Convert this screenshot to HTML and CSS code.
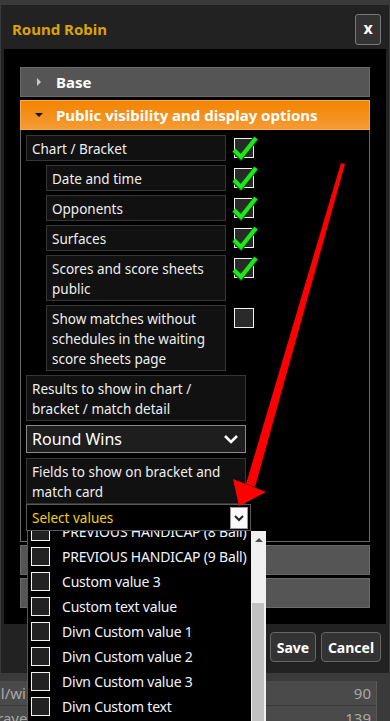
FILE: index.html
```html
<!DOCTYPE html>
<html lang="en">
<head>
    <meta charset="UTF-8">
    <meta name="viewport" content="width=device-width, initial-scale=1.0">
    <title>Round Robin</title>
    <link rel="stylesheet" href="styles.css">
</head>
<body>
    <div class="dialog">
        <div class="dlg-head">
            <h1 class="dlg-title">Round Robin</h1>
            <button type="button" class="close-btn">x</button>
        </div>
        <div class="dlg-body">
            <div class="accordion">
                <div class="acc-head"><span class="tri-right"></span>Base</div>
                <div class="acc-head active"><span class="tri-down"></span>Public visibility and display options</div>
                <div class="acc-panel">
                    <div class="opt-row">
                        <div class="opt-label">Chart / Bracket</div>
                        <span class="cb checked"><svg viewBox="0 0 26 26"><polyline points="2,15 9,22 24,3" class="tick-edge"/><polyline points="2,15 9,22 24,3" class="tick"/></svg></span>
                    </div>
                    <div class="opt-row sub">
                        <div class="opt-label">Date and time</div>
                        <span class="cb checked"><svg viewBox="0 0 26 26"><polyline points="2,15 9,22 24,3" class="tick-edge"/><polyline points="2,15 9,22 24,3" class="tick"/></svg></span>
                    </div>
                    <div class="opt-row sub">
                        <div class="opt-label">Opponents</div>
                        <span class="cb checked"><svg viewBox="0 0 26 26"><polyline points="2,15 9,22 24,3" class="tick-edge"/><polyline points="2,15 9,22 24,3" class="tick"/></svg></span>
                    </div>
                    <div class="opt-row sub">
                        <div class="opt-label">Surfaces</div>
                        <span class="cb checked"><svg viewBox="0 0 26 26"><polyline points="2,15 9,22 24,3" class="tick-edge"/><polyline points="2,15 9,22 24,3" class="tick"/></svg></span>
                    </div>
                    <div class="opt-row sub">
                        <div class="opt-label">Scores and score sheets public</div>
                        <span class="cb checked"><svg viewBox="0 0 26 26"><polyline points="2,15 9,22 24,3" class="tick-edge"/><polyline points="2,15 9,22 24,3" class="tick"/></svg></span>
                    </div>
                    <div class="opt-row sub">
                        <div class="opt-label">Show matches without schedules in the waiting score sheets page</div>
                        <span class="cb"></span>
                    </div>

                    <div class="field-label">Results to show in chart / bracket / match detail</div>
                    <div class="select">
                        <span>Round Wins</span>
                        <svg class="chev" viewBox="0 0 16 10"><polyline points="2,2 8,8 14,2"/></svg>
                    </div>

                    <div class="field-group">
                        <div class="field-label">Fields to show on bracket and match card</div>
                        <div class="multi">
                            <span class="placeholder">Select values</span>
                            <span class="multi-btn"><svg viewBox="0 0 12 8"><polyline points="2,2 6,6 10,2"/></svg></span>

                            <div class="dropdown">
                                <div class="dd-list">
                                    <div class="dd-item"><span class="dd-cb"></span>PREVIOUS HANDICAP (8 Ball)</div>
                                    <div class="dd-item"><span class="dd-cb"></span>PREVIOUS HANDICAP (9 Ball)</div>
                                    <div class="dd-item"><span class="dd-cb"></span>Custom value 3</div>
                                    <div class="dd-item"><span class="dd-cb"></span>Custom text value</div>
                                    <div class="dd-item"><span class="dd-cb"></span>Divn Custom value 1</div>
                                    <div class="dd-item"><span class="dd-cb"></span>Divn Custom value 2</div>
                                    <div class="dd-item"><span class="dd-cb"></span>Divn Custom value 3</div>
                                    <div class="dd-item"><span class="dd-cb"></span>Divn Custom text</div>
                                </div>
                                <div class="dd-scroll">
                                    <span class="sc-up"></span>
                                    <span class="sc-thumb"></span>
                                </div>
                            </div>
                        </div>
                    </div>
                </div>
                <div class="acc-head empty"></div>
                <div class="acc-head empty"></div>
            </div>
        </div>
        <div class="dlg-foot">
            <button type="button" class="foot-btn save">Save</button>
            <button type="button" class="foot-btn cancel">Cancel</button>
        </div>
    </div>

    <div class="bg-table">
        <div class="bg-row"><span class="bg-left">ll/wi</span><span class="bg-num">90</span></div>
        <div class="bg-row"><span class="bg-left">rave</span><span class="bg-num">139</span></div>
    </div>

    <svg class="red-arrow" viewBox="0 0 390 721">
        <polygon points="341,163 345,164 255,487 246,484"/>
        <polygon points="233,479 266,492 239,506"/>
    </svg>
</body>
</html>
```

FILE: styles.css
```css
body {
    margin: 0;
    height: 721px;
    overflow: hidden;
    background-color: #3a3a3a;
    font-family: "Noto Sans", "Open Sans", sans-serif;
    position: relative;
}
.dialog {
    margin: 5px 1px 0 1px;
    background-color: #222;
    padding: 0 3px;
}
.dlg-head {
    display: flex;
    align-items: center;
    justify-content: space-between;
    height: 44px;
    padding: 0 5px 0 8px;
}
.dlg-title {
    margin: 0;
    font-size: 15px;
    font-weight: bold;
    color: #dea300;
    padding-top: 3px;
}
.close-btn {
    width: 26px;
    height: 31px;
    margin-top: 5px;
    background-color: #333;
    border: 1px solid #777;
    border-radius: 3px;
    color: #fff;
    font-family: inherit;
    font-weight: bold;
    font-size: 16px;
    line-height: 24px;
    padding: 0 0 4px;
    cursor: pointer;
}
.dlg-body {
    background-color: #000;
    padding: 18px 16px 16px;
}
.accordion {
    display: flex;
    flex-direction: column;
}
.acc-head {
    height: 28px;
    line-height: 28px;
    background-color: #555;
    border: 1px solid #6a6a6a;
    color: #fff;
    font-weight: bold;
    font-size: 15px;
    padding-left: 35px;
    margin-top: 3px;
    position: relative;
}
.acc-head:first-child {
    margin-top: 0;
}
.acc-head.active {
    background: linear-gradient(#f38400, #f59b35);
    border-color: #f7ad4c;
}
.tri-right {
    position: absolute;
    left: 16px;
    top: 10px;
    border-left: 4px solid #c8c8c8;
    border-top: 4px solid transparent;
    border-bottom: 4px solid transparent;
}
.tri-down {
    position: absolute;
    left: 14px;
    top: 12px;
    border-top: 4px solid #111;
    border-left: 4px solid transparent;
    border-right: 4px solid transparent;
}
.acc-panel {
    border: 1px solid #6a6a6a;
    border-top: none;
    padding: 5px 5px 10px;
    display: flex;
    flex-direction: column;
    gap: 4px;
    color: #eee;
    font-size: 13.5px;
    line-height: 20px;
}
.opt-row {
    display: flex;
    align-items: flex-start;
    gap: 8px;
}
.opt-label {
    width: 188px;
    padding: 3px 5px 1px;
    background-color: #111;
    border: 1px solid #353535;
}
.opt-row.sub .opt-label {
    width: 168px;
    margin-left: 20px;
}
.cb {
    width: 18px;
    height: 18px;
    margin-top: 3px;
    border: 1px solid #f2f2f2;
    background-color: #2a2a2a;
    position: relative;
}
.cb svg {
    position: absolute;
    left: -3px;
    top: -4px;
    width: 26px;
    height: 26px;
}
.tick-edge {
    fill: none;
    stroke: #0b4d0b;
    stroke-width: 6;
}
.tick {
    fill: none;
    stroke: #1fe81f;
    stroke-width: 4;
}
.field-label {
    width: 208px;
    padding: 3px 5px 1px;
    background-color: #111;
    border: 1px solid #353535;
}
.select {
    width: 208px;
    height: 26px;
    padding: 0 5px;
    background-color: #1e1e1e;
    border: 1px solid #8a8a8a;
    display: flex;
    align-items: center;
    justify-content: space-between;
    font-size: 16px;
    color: #fff;
}
.chev {
    width: 16px;
    height: 10px;
    margin-right: 1px;
}
.chev polyline {
    fill: none;
    stroke: #fff;
    stroke-width: 2.6;
}
.field-group {
    margin-top: 1px;
}
.multi {
    width: 216px;
    height: 25px;
    padding: 0 2px 0 5px;
    background-color: #000;
    border: 1px solid #5a5a5a;
    display: flex;
    align-items: center;
    justify-content: space-between;
    position: relative;
}
.placeholder {
    color: #f2d200;
}
.multi-btn {
    width: 16px;
    height: 20px;
    background-color: #fafafa;
    border: 1px solid #999;
    display: flex;
    align-items: center;
    justify-content: center;
}
.multi-btn svg {
    width: 12px;
    height: 8px;
}
.multi-btn polyline {
    fill: none;
    stroke: #222;
    stroke-width: 2;
}
.dropdown {
    position: absolute;
    left: 0;
    top: 26px;
    width: 238px;
    height: 200px;
    background-color: #000;
    border-left: 1px solid #555;
    display: flex;
    overflow: hidden;
    z-index: 2;
}
.dd-list {
    flex: 1;
    margin-top: -12px;
    overflow: hidden;
}
.dd-item {
    height: 25px;
    display: flex;
    align-items: center;
    gap: 12px;
    padding-left: 3px;
    font-size: 14px;
    letter-spacing: -0.2px;
    color: #f0f4ff;
    white-space: nowrap;
}
.dd-cb {
    width: 17px;
    height: 17px;
    border: 1.5px solid #f4f4f4;
    background-color: #222;
    flex-shrink: 0;
}
.dd-scroll {
    width: 15px;
    flex-shrink: 0;
    background-color: #f0f0f0;
    position: relative;
}
.sc-up {
    position: absolute;
    left: 4px;
    top: 7px;
    border-bottom: 4px solid #505050;
    border-left: 4px solid transparent;
    border-right: 4px solid transparent;
}
.sc-thumb {
    position: absolute;
    left: 1px;
    right: 2px;
    top: 72px;
    bottom: 0;
    background-color: #c1c1c1;
}
.dlg-foot {
    height: 49px;
    display: flex;
    justify-content: flex-end;
    align-items: flex-start;
    gap: 5px;
    padding-right: 5px;
}
.foot-btn {
    margin-top: 8px;
    height: 30px;
    padding: 0;
    background-color: #333;
    border: 1px solid #666;
    border-radius: 4px;
    color: #fff;
    font-family: inherit;
    font-weight: bold;
    font-size: 14px;
    cursor: pointer;
}
.foot-btn.save {
    width: 46px;
}
.foot-btn.cancel {
    width: 60px;
}
.bg-table {
    margin-top: 8px;
    margin-right: 13px;
    border-right: 1px solid #5a5a5a;
    color: #a8a8a8;
    font-size: 15px;
}
.bg-row {
    height: 24px;
    line-height: 24px;
    background-color: #4a4a4a;
    border-bottom: 1px solid #3a3a3a;
    display: flex;
    justify-content: space-between;
    padding-right: 5px;
}
.bg-left {
    margin-left: -3px;
}
.red-arrow {
    position: absolute;
    left: 0;
    top: 0;
    width: 390px;
    height: 721px;
    pointer-events: none;
}
.red-arrow polygon {
    fill: #ff0000;
}
```
